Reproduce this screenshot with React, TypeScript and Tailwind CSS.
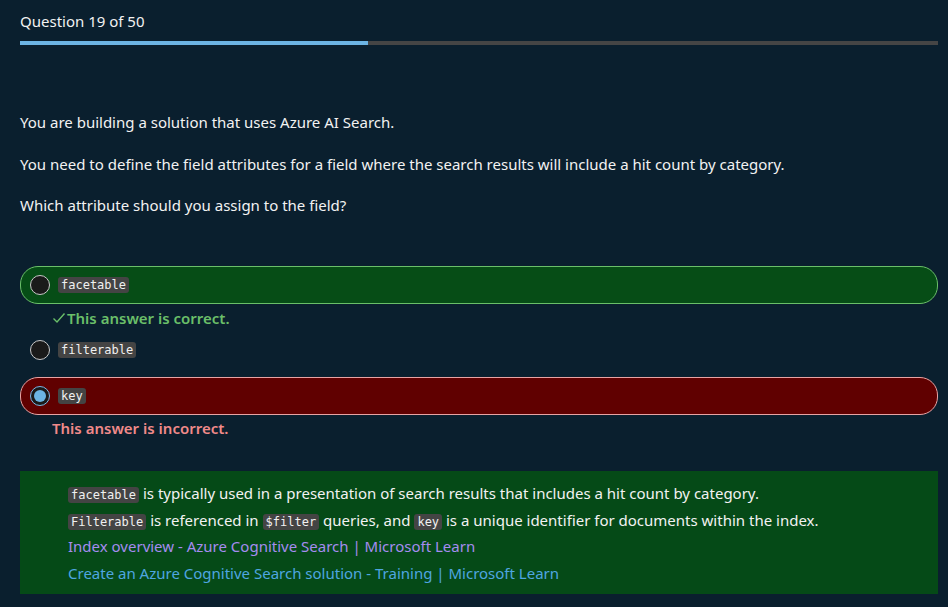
import React from "react";

const Code = ({ children }: { children: React.ReactNode }) => (
  <code className="rounded-[3px] bg-[#444444] px-[3px] py-[1px] text-[12px] leading-[14px] text-[#f0f0f0] [font-family:'DejaVu_Sans_Mono',monospace]">
    {children}
  </code>
);

const Radio = ({ checked }: { checked?: boolean }) => (
  <span
    className={
      "flex h-[20px] w-[20px] shrink-0 items-center justify-center rounded-full border-[1.5px] bg-[#1a1a1a] " +
      (checked ? "border-[#7ab8e6]" : "border-[#c8c8c8]")
    }
  >
    {checked && <span className="h-[12px] w-[12px] rounded-full bg-[#6cb4e4]" />}
  </span>
);

export default function App() {
  return (
    <div className="min-h-[607px] w-full bg-[#0a1f2e] text-[15px] text-[#f2f2f2] [font-family:'Noto_Sans',sans-serif]">
      <div className="px-[20px] pt-[10px]">
        <div className="h-[22px] leading-[22px]">Question 19 of 50</div>
        <div className="mt-[9px] flex h-[4px] w-[918px] bg-[#454545]">
          <div className="h-full w-[348px] bg-[#6cb4e4]" />
        </div>

        <div className="mt-[66px] flex flex-col gap-[19.5px] leading-[22px]">
          <p>You are building a solution that uses Azure AI Search.</p>
          <p>
            You need to define the field attributes for a field where the search results will include a hit count by
            category.
          </p>
          <p>Which attribute should you assign to the field?</p>
        </div>

        <div className="mt-[50px] flex flex-col">
          <div className="flex h-[38px] w-[918px] items-center gap-[8px] rounded-[18px] border border-[#6abf69] bg-[#064d16] px-[9px]">
            <Radio />
            <Code>facetable</Code>
          </div>
          <div className="mt-[3px] flex h-[22px] items-center pl-[32px] font-semibold text-[#6abf69]">
            <svg width="14" height="14" viewBox="0 0 14 14" className="mr-[1px]">
              <path d="M1.5 7.5 L5 11 L12.5 2.5" fill="none" stroke="#6abf69" strokeWidth="1.4" />
            </svg>
            This answer is correct.
          </div>
          <div className="mt-[10px] flex h-[22px] items-center gap-[8px] px-[10px]">
            <Radio />
            <Code>filterable</Code>
          </div>
          <div className="mt-[16px] flex h-[38px] w-[918px] items-center gap-[8px] rounded-[18px] border border-[#e8a3a3] bg-[#600000] px-[9px]">
            <Radio checked />
            <Code>key</Code>
          </div>
          <div className="mt-[2px] flex h-[22px] items-center pl-[32px] font-semibold text-[#f08a8a]">
            This answer is incorrect.
          </div>
        </div>

        <div className="mt-[32px] w-[918px] bg-[#054a17] pb-[8px] pl-[48px] pt-[9px] leading-[26.6px]">
          <div className="h-[26.6px]">
            <Code>facetable</Code> is typically used in a presentation of search results that includes a hit count by
            category.
          </div>
          <div className="h-[26.6px]">
            <Code>Filterable</Code> is referenced in <Code>$filter</Code> queries, and <Code>key</Code> is a unique
            identifier for documents within the index.
          </div>
          <div className="h-[26.6px]">
            <a className="text-[#a58cf0]">Index overview - Azure Cognitive Search | Microsoft Learn</a>
          </div>
          <div className="h-[26.6px]">
            <a className="text-[#4fa6e0]">Create an Azure Cognitive Search solution - Training | Microsoft Learn</a>
          </div>
        </div>
      </div>
    </div>
  );
}
